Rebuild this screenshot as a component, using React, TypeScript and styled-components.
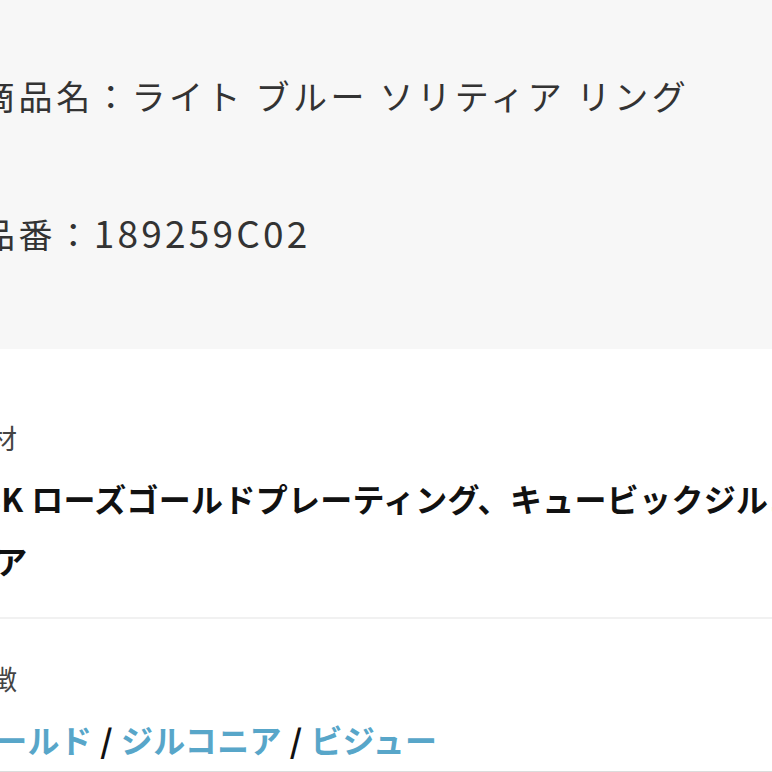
import React from "react";
import styled, { createGlobalStyle } from "styled-components";

const GlobalStyle = createGlobalStyle`
  html, body {
    margin: 0;
    padding: 0;
    background: #fff;
    overflow: hidden;
  }
  body {
    font-family: "Noto Sans CJK JP", "Noto Sans", sans-serif;
  }
`;

const Page = styled.div`
  margin-left: -37px;
  width: 850px;
`;

const Summary = styled.div`
  background: #f7f7f7;
  padding: 71px 0 91px 18px;
  display: flex;
  flex-direction: column;
  gap: 88px;
`;

const SummaryLine = styled.div`
  font-size: 34px;
  line-height: 49px;
  letter-spacing: 3.6px;
  color: #333;
  white-space: nowrap;
`;

const Code = styled.span`
  font-size: 37px;
  letter-spacing: 3.2px;
`;

const Spec = styled.section<{ $top: number; $last?: boolean }>`
  padding: ${({ $top }) => $top}px 0 0 0;
  border-bottom: ${({ $last }) => ($last ? "1px solid #dcdcdc" : "2px solid #f1f1f1")};
  padding-bottom: ${({ $last }) => ($last ? 1 : 26)}px;
  display: flex;
  flex-direction: column;
  gap: 10px;
`;

const SpecLabel = styled.div`
  font-size: 27px;
  line-height: 38px;
  color: #444;
`;

const SpecValue = styled.div`
  font-size: 32px;
  line-height: 62px;
  font-weight: 700;
  letter-spacing: 0.3px;
  color: #111;
`;

const Tag = styled.a`
  color: #58a6c9;
  text-decoration: none;
`;

const Sep = styled.span`
  color: #111;
  margin: 0 8px;
`;

const tags = ["ゴールド", "ジルコニア", "ビジュー"];

const App: React.FC = () => {
  return (
    <Page>
      <GlobalStyle />
      <Summary>
        <SummaryLine>商品名：ライト ブルー ソリティア リング</SummaryLine>
        <SummaryLine>
          品番：<Code>189259C02</Code>
        </SummaryLine>
      </Summary>
      <Spec $top={70}>
        <SpecLabel>素材</SpecLabel>
        <SpecValue>18K ローズゴールドプレーティング、キュービックジルコニア</SpecValue>
      </Spec>
      <Spec $top={41} $last>
        <SpecLabel>特徴</SpecLabel>
        <SpecValue>
          {tags.map((t, i) => (
            <React.Fragment key={t}>
              {i > 0 && <Sep>/</Sep>}
              <Tag href="#">{t}</Tag>
            </React.Fragment>
          ))}
        </SpecValue>
      </Spec>
    </Page>
  );
};

export default App;
